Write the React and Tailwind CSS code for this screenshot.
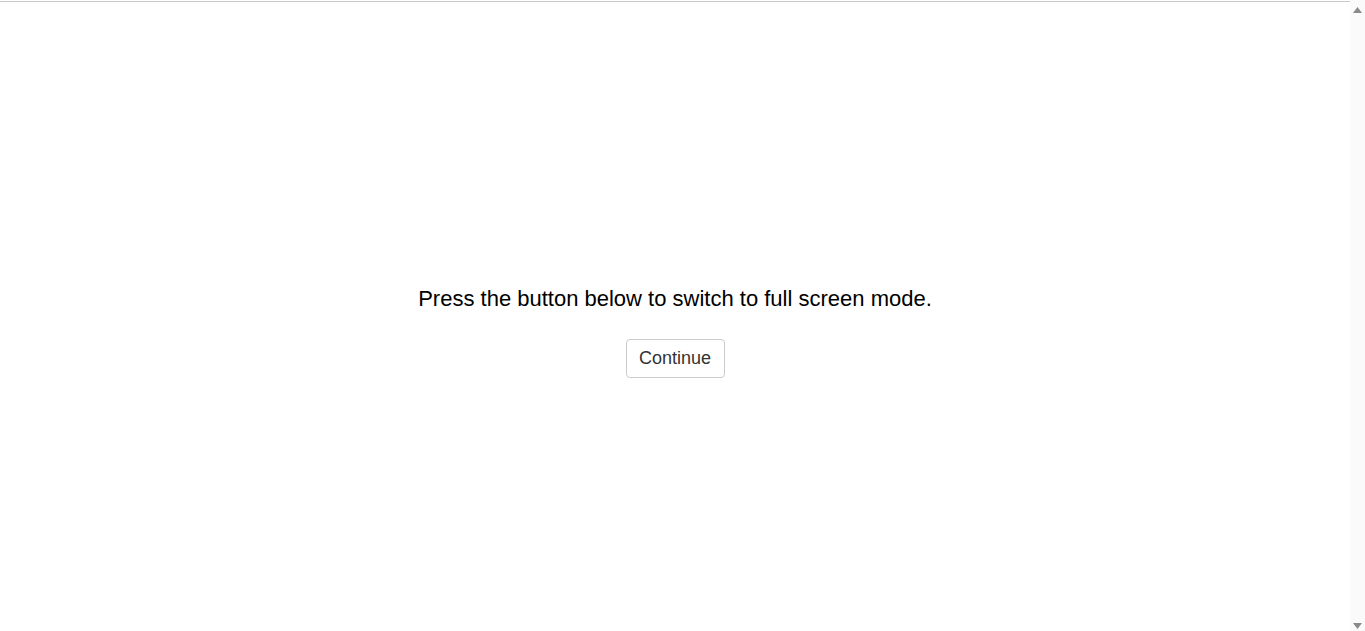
export default function App() {
  return (
    <div
      className="flex h-screen overflow-hidden bg-white"
      style={{ fontFamily: '"Liberation Sans", Arial, sans-serif' }}
    >
      <div className="flex-1">
        <div className="mt-px h-px bg-[#c8c8c8]" />
        <div className="flex flex-col items-center pt-[284px]">
          <p className="text-[22px] leading-[25px] text-black">
            Press the button below to switch to full screen mode.
          </p>
          <button
            type="button"
            className="mt-[28px] h-[39px] w-[99px] rounded-[4px] border border-[#cccccc] bg-white pb-px text-[18px] leading-[24px] text-[#333333]"
          >
            Continue
          </button>
        </div>
      </div>
      <div className="flex w-[15px] flex-col items-center justify-between bg-[#fafafa] pt-[7px] pb-[2px]">
        <svg width="9" height="6" viewBox="0 0 9 6">
          <polygon points="4.5,0 9,6 0,6" fill="#8a8a8a" />
        </svg>
        <svg width="9" height="6" viewBox="0 0 9 6">
          <polygon points="0,0 9,0 4.5,6" fill="#8a8a8a" />
        </svg>
      </div>
    </div>
  );
}
